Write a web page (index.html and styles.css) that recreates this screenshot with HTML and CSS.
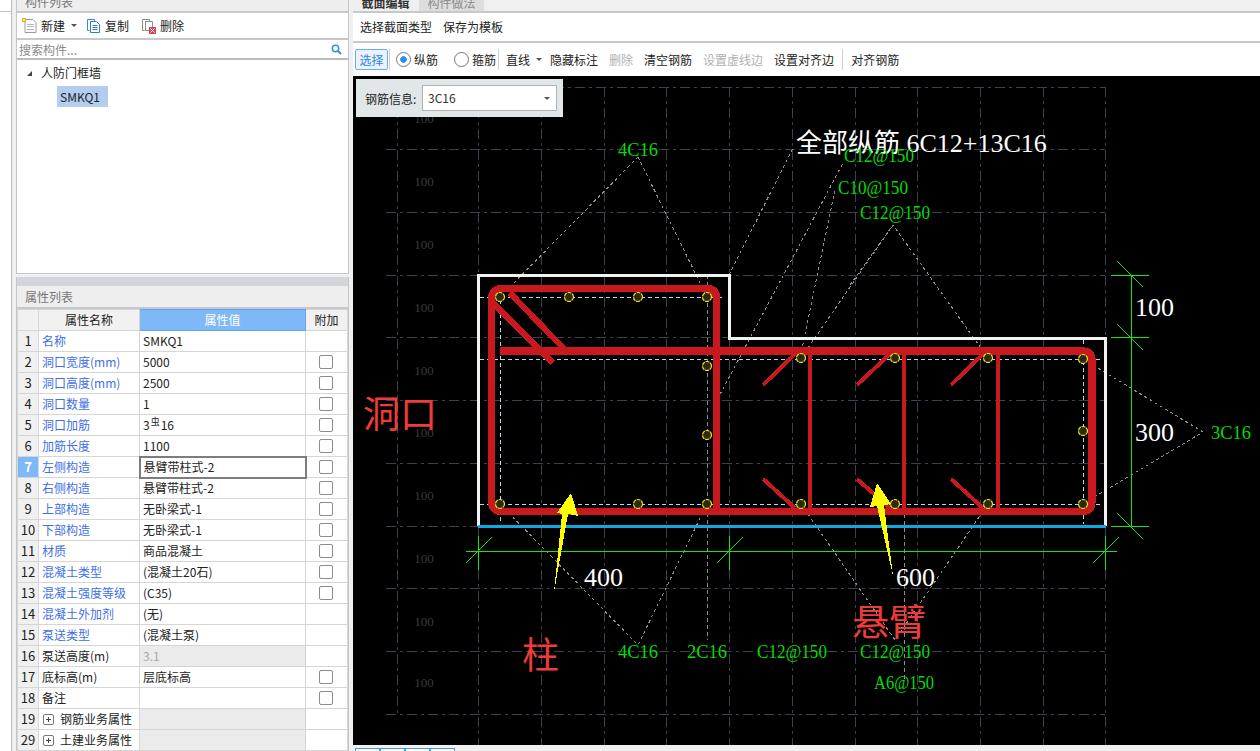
FILE: index.html
```html
<!DOCTYPE html>
<html lang="zh">
<head>
<meta charset="utf-8">
<title>截面编辑</title>
<link rel="stylesheet" href="styles.css">
</head>
<body>
<div class="app">
  <aside class="sidebar">
    <div class="rail"><div class="rail-top"></div></div>
    <div class="panels">
      <section class="list-panel">
        <div class="panel-clip"><span>构件列表</span></div>
        <div class="list-tools">
          <span class="tool tool-new">
            <svg class="ico" viewBox="0 0 15 16"><path d="M3 1.500h8l3 3v10H3z" fill="#fff" stroke="#9a9a9a"/><path d="M5 6.500h7M5 8.500h7M5 11.500h7" stroke="#b5b5b5"/><rect x="0" y="0" width="4" height="4" fill="#f5a623"/><rect x="1" y="1" width="2" height="2" fill="#ffe2a8"/></svg>
            新建<i class="caret"></i></span>
          <span class="tool tool-copy">
            <svg class="ico" viewBox="0 0 15 16"><path d="M1.500 1.500h7v2" fill="none" stroke="#3f86d8"/><path d="M1.500 1.500v11h2" fill="none" stroke="#3f86d8"/><path d="M4.500 3.500h6l3 3v8h-9z" fill="#fff" stroke="#2f7bd6"/><path d="M6.500 7.500h5M6.500 9.500h5M6.500 11.500h5" stroke="#2f7bd6"/></svg>
            复制</span>
          <span class="tool tool-del">
            <svg class="ico" viewBox="0 0 15 16"><path d="M1.500 1.500h7v2M1.500 1.500v11h2" fill="none" stroke="#8c8c8c"/><path d="M4.500 3.500h7v9h-7z" fill="#fff" stroke="#8c8c8c"/><rect x="8" y="9" width="7" height="7" fill="#d9454f"/><path d="M9.500 10.500l4 4M13.500 10.500l-4 4" stroke="#fff"/></svg>
            删除</span>
        </div>
        <div class="search">
          <span>搜索构件...</span>
          <svg class="search-ico" viewBox="0 0 11 11"><circle cx="4.500" cy="4.500" r="3.200" fill="none" stroke="#3d8fd0" stroke-width="1.500"/><path d="M7 7l3 3" stroke="#3d8fd0" stroke-width="2"/></svg>
        </div>
        <div class="tree">
          <div class="tree-root"><i class="tree-arrow"></i>人防门框墙</div>
          <div class="tree-leaf"><span>SMKQ1</span></div>
        </div>
      </section>
      <section class="props-panel">
        <div class="props-band"></div>
        <div class="props-title">属性列表</div>
        <table class="props">
          <colgroup><col class="c-idx"><col class="c-name"><col class="c-val"><col class="c-add"></colgroup>
          <thead>
            <tr><th></th><th>属性名称</th><th class="active">属性值</th><th>附加</th></tr>
          </thead>
          <tbody>
            <tr><td class="idx">1</td><td class="pub">名称</td><td>SMKQ1</td><td class="add"></td></tr>
            <tr><td class="idx">2</td><td class="pub">洞口宽度(mm)</td><td>5000</td><td class="add"><i class="chk"></i></td></tr>
            <tr><td class="idx">3</td><td class="pub">洞口高度(mm)</td><td>2500</td><td class="add"><i class="chk"></i></td></tr>
            <tr><td class="idx">4</td><td class="pub">洞口数量</td><td>1</td><td class="add"><i class="chk"></i></td></tr>
            <tr><td class="idx">5</td><td class="pub">洞口加筋</td><td>3<sup class="rebar">虫</sup>16</td><td class="add"><i class="chk"></i></td></tr>
            <tr><td class="idx">6</td><td class="pub">加筋长度</td><td>1100</td><td class="add"><i class="chk"></i></td></tr>
            <tr><td class="idx idx-on">7</td><td class="pub">左侧构造</td><td class="editing">悬臂带柱式-2</td><td class="add"><i class="chk"></i></td></tr>
            <tr><td class="idx">8</td><td class="pub">右侧构造</td><td>悬臂带柱式-2</td><td class="add"><i class="chk"></i></td></tr>
            <tr><td class="idx">9</td><td class="pub">上部构造</td><td>无卧梁式-1</td><td class="add"><i class="chk"></i></td></tr>
            <tr><td class="idx">10</td><td class="pub">下部构造</td><td>无卧梁式-1</td><td class="add"><i class="chk"></i></td></tr>
            <tr><td class="idx">11</td><td class="pub">材质</td><td>商品混凝土</td><td class="add"><i class="chk"></i></td></tr>
            <tr><td class="idx">12</td><td class="pub">混凝土类型</td><td>(混凝土20石)</td><td class="add"><i class="chk"></i></td></tr>
            <tr><td class="idx">13</td><td class="pub">混凝土强度等级</td><td>(C35)</td><td class="add"><i class="chk"></i></td></tr>
            <tr><td class="idx">14</td><td class="pub">混凝土外加剂</td><td>(无)</td><td class="add"></td></tr>
            <tr><td class="idx">15</td><td class="pub">泵送类型</td><td>(混凝土泵)</td><td class="add"></td></tr>
            <tr><td class="idx">16</td><td>泵送高度(m)</td><td class="off">3.1</td><td class="add"></td></tr>
            <tr><td class="idx">17</td><td>底标高(m)</td><td>层底标高</td><td class="add"><i class="chk"></i></td></tr>
            <tr><td class="idx">18</td><td>备注</td><td></td><td class="add"><i class="chk"></i></td></tr>
            <tr><td class="idx">19</td><td class="group"><i class="plus"></i>钢筋业务属性</td><td class="off"></td><td class="add"></td></tr>
            <tr><td class="idx">29</td><td class="group"><i class="plus"></i>土建业务属性</td><td class="off"></td><td class="add"></td></tr>
          </tbody>
        </table>
      </section>
    </div>
  </aside>
  <main class="editor">
    <div class="tabs">
      <span class="tab tab-on">截面编辑</span>
      <span class="tab">构件做法</span>
    </div>
    <div class="bar-one">
      <span class="btn">选择截面类型</span>
      <span class="btn">保存为模板</span>
    </div>
    <div class="bar-two">
      <span class="btn-select">选择</span>
      <i class="sep"></i>
      <span class="radio radio-on">纵筋</span>
      <span class="radio radio-2">箍筋</span>
      <i class="sep"></i>
      <span class="btn btn-line">直线<i class="caret"></i></span>
      <span class="btn">隐藏标注</span>
      <span class="btn btn-off">删除</span>
      <span class="btn">清空钢筋</span>
      <span class="btn btn-off">设置虚线边</span>
      <span class="btn">设置对齐边</span>
      <i class="sep sep-last"></i>
      <span class="btn">对齐钢筋</span>
    </div>
    <div class="canvas">
      <svg class="drawing" viewBox="353 76 907 669">
        <g class="grid">
          <path d="M386 87H1105M386 149H1105M386 212H1105M386 275H1105M386 337H1105M386 400H1105M386 463H1105M386 526H1105M386 588H1105M386 651H1105M386 714H1105"/>
          <path d="M397 87V714M478 87V745M541 87V745M604 87V745M666 87V745M729 87V745M792 87V745M855 87V745M917 87V745M980 87V745M1043 87V745M1105 87V745"/>
        </g>
        <g class="scale-labels">
          <text x="424" y="123">100</text><text x="424" y="186">100</text><text x="424" y="249">100</text><text x="424" y="312">100</text><text x="424" y="375">100</text><text x="424" y="437">100</text><text x="424" y="500">100</text><text x="424" y="563">100</text><text x="424" y="626">100</text><text x="424" y="687">100</text>
        </g>
        <path class="guide" d="M480 297H722M480 359H1100M480 504H1100M500 286V524M1083 340V524"/>
        <path class="guide-dim" d="M707 275V640M904 430V680"/>
        <path class="leader" d="M638 157L500 297M638 157L707 297M729 275L793 148M717 400L843 163M800 358L835 190M850 285L893 225L988 358M801 358L893 225M500 504L638 645L707 504M1083 359L1203 432L1083 504M801 504L895 640L988 504"/>
        <path class="rebar-main" d="M501 288.500H706Q716.500 288.500 716.500 299V511M491.500 300Q491.500 288.500 503 288.500M491.500 296V500Q491.500 511.500 503 511.500H1082Q1092 511.500 1092 501V361Q1092 351 1082 351H500"/>
        <path class="rebar-hook" d="M493 303L553 363M510 293L567 352"/>
        <path class="rebar-tie" d="M810 351V511M904 351V511M998 351V511M763 385L795 354M857 385L890 354M951 385L983 354M763 479L795 508M857 479L890 508M951 479L983 508"/>
        <g class="bars">
          <circle cx="500" cy="297" r="4.500"/><circle cx="569" cy="297" r="4.500"/><circle cx="638" cy="297" r="4.500"/><circle cx="707" cy="297" r="4.500"/><circle cx="707" cy="366" r="4.500"/><circle cx="707" cy="435" r="4.500"/><circle cx="707" cy="504" r="4.500"/><circle cx="638" cy="504" r="4.500"/><circle cx="500" cy="504" r="4.500"/><circle cx="801" cy="358" r="4.500"/><circle cx="895" cy="358" r="4.500"/><circle cx="988" cy="358" r="4.500"/><circle cx="1083" cy="359" r="4.500"/><circle cx="1083" cy="431" r="4.500"/><circle cx="1083" cy="504" r="4.500"/><circle cx="988" cy="504" r="4.500"/><circle cx="895" cy="504" r="4.500"/><circle cx="801" cy="504" r="4.500"/>
        </g>
        <path class="outline" d="M478 526V275.500H729V338.500H1105.500V526"/>
        <path class="base" d="M478 526H1106"/>
        <path class="dim" d="M466 551.500H1117M478.500 536V570M466 563L492 537M729.500 536V570M717 563L743 537M1105.500 536V570M1093 563L1119 537M1131.500 275V526M1111 275.500H1149M1111 337.500H1149M1111 526.500H1149M1117 261L1143 287M1117 324L1143 350M1117 513L1143 539"/>
        <polygon class="arrow" points="571,493 578,516 568,514 554,592 562,514 557,513"/>
        <polygon class="arrow" points="877,483 891,504 884,505 893,576 877,506 870,507"/>
        <g class="notes">
          <text x="796" y="152">全部纵筋 6C12+13C16</text>
          <text x="584" y="586">400</text>
          <text x="896" y="586">600</text>
          <text x="1135" y="316">100</text>
          <text x="1135" y="441">300</text>
        </g>
        <g class="labels">
          <text x="618" y="156" textLength="40" lengthAdjust="spacingAndGlyphs">4C16</text>
          <text x="844" y="162" textLength="70" lengthAdjust="spacingAndGlyphs">C12@150</text>
          <text x="838" y="194" textLength="70" lengthAdjust="spacingAndGlyphs">C10@150</text>
          <text x="860" y="219" textLength="70" lengthAdjust="spacingAndGlyphs">C12@150</text>
          <text x="1211" y="439" textLength="40" lengthAdjust="spacingAndGlyphs">3C16</text>
          <text x="618" y="658" textLength="40" lengthAdjust="spacingAndGlyphs">4C16</text>
          <text x="687" y="658" textLength="40" lengthAdjust="spacingAndGlyphs">2C16</text>
          <text x="757" y="658" textLength="70" lengthAdjust="spacingAndGlyphs">C12@150</text>
          <text x="860" y="658" textLength="70" lengthAdjust="spacingAndGlyphs">C12@150</text>
          <text x="874" y="689" textLength="60" lengthAdjust="spacingAndGlyphs">A6@150</text>
        </g>
        <g class="marks">
          <text x="363" y="428">洞口</text>
          <text x="522" y="669">柱</text>
          <text x="852" y="636">悬臂</text>
        </g>
      </svg>
      <div class="rebar-info">
        <label>钢筋信息:</label>
        <div class="select">3C16<i class="caret"></i></div>
      </div>
    </div>
    <div class="view-tabs"><i></i><i></i><i></i><i></i></div>
  </main>
</div>
</body>
</html>
```
FILE: styles.css
```css
* { box-sizing: border-box; }
html, body { margin: 0; padding: 0; height: 100%; overflow: hidden; }
body { font-family: "Noto Sans CJK SC", "Noto Sans", sans-serif; font-size: 12px; color: #222; background: #f0f0f0; }
i { display: block; font-style: normal; }

.app { display: flex; width: 1260px; height: 751px; overflow: hidden; }

/* sidebar */
.sidebar { width: 353px; display: flex; flex: none; }
.rail { width: 12px; background: #fff; border-right: 1px solid #bcbcbc; margin-right: 4px; }
.rail-top { height: 12px; border-bottom: 1px solid #c4c4c4; }
.panels { width: 333px; display: flex; flex-direction: column; }

.list-panel { height: 274px; background: #fff; border: 1px solid #c4c6c9; border-top: 0; display: flex; flex-direction: column; flex: none; }
.panel-clip { height: 13px; background: #eeeeee; border-bottom: 2px solid #c6c8cb; overflow: hidden; color: #777; padding-left: 8px; line-height: 4px; flex: none; }
.list-tools { height: 27px; display: flex; align-items: center; border-bottom: 2px solid #c6c8cb; flex: none; }
.tool { display: flex; align-items: center; height: 25px; }
.tool-new { margin-left: 5px; width: 64px; }
.tool-copy { width: 55px; }
.tool-del { width: 50px; }
.ico { width: 15px; height: 16px; margin-right: 4px; flex: none; }
.tool-new .caret { margin-left: 6px; }
.caret { width: 0; height: 0; border: 3px solid transparent; border-top: 3px solid #555; border-bottom: 0; display: inline-block; }
.search { height: 20px; display: flex; align-items: center; justify-content: space-between; padding: 0 6px 0 2px; border-bottom: 2px solid #b9bbbe; color: #8a8a8a; flex: none; }
.search-ico { width: 11px; height: 11px; }
.tree { flex: 1; padding-top: 3px; }
.tree-root { height: 20px; line-height: 20px; padding-left: 23px; display: flex; align-items: center; }
.tree-arrow { width: 0; height: 0; border-bottom: 5px solid #444; border-left: 5px solid transparent; margin: 0 9px 0 -13px; }
.tree-leaf { padding-left: 40px; margin-top: 3px; }
.tree-leaf span { display: inline-block; height: 21px; line-height: 21px; width: 51px; padding-left: 3px; background: #b2cdef; }

.props-panel { margin-top: 3px; flex: none; background: #fff; border-left: 1px solid #c4c6c9; border-right: 1px solid #c4c6c9; }
.props-band { height: 9px; background: #d4d5da; }
.props-title { height: 23px; line-height: 21px; background: #eeeeee; color: #777; padding-left: 8px; border-bottom: 2px solid #c6c8cb; }
.props { border-collapse: collapse; table-layout: fixed; width: 330px; }
.c-idx { width: 21px; }
.c-name { width: 101px; }
.c-val { width: 166px; }
.c-add { width: 42px; }
.props th, .props td { height: 21px; padding: 0 0 0 3px; border: 1px solid #d6d6d6; font-weight: 400; white-space: nowrap; overflow: hidden; line-height: 18px; }
.props th { background: #f1f1f1; text-align: center; padding: 0; }
.props th.active { background: #7fb8f8; color: #fff; border-color: #62a3ea; }
.props .idx { background: #f0f0f0; text-align: center; padding: 0; font-size: 13px; }
.props .idx-on { background: #7fb8f8; color: #fff; font-weight: 700; }
.props .pub { color: #3f6fe6; }
.props .off { background: #ebebeb; color: #aaa; }
.props .editing { border: 2px solid #7d7d7d; }
.props .group { padding-left: 4px; }
.props .add { padding: 0 2px 0 0; }
.rebar { font-size: 9px; line-height: 0; margin: 0 1px; }
.chk { width: 14px; height: 14px; margin: 0 auto; border: 1px solid #8c8c8c; border-radius: 2px; background: #fff; }
.plus { display: inline-block; width: 11px; height: 11px; border: 1px solid #777; border-radius: 2px; margin-right: 6px; vertical-align: -1px; background: linear-gradient(#444, #444) center / 5px 1px no-repeat, linear-gradient(#444, #444) center / 1px 5px no-repeat; }

/* editor */
.editor { flex: 1; display: flex; flex-direction: column; min-width: 0; }
.tabs { height: 13px; display: flex; align-items: flex-end; border-bottom: 2px solid #c6c8cb; background: #f0f0f0; overflow: hidden; flex: none; }
.tab { width: 65px; height: 11px; text-align: center; line-height: 5px; color: #8a8a8a; background: #dddddd; margin-right: 1px; overflow: hidden; }
.tab-on { background: #efefef; color: #333; font-weight: 700; }
.bar-one { height: 30px; padding: 0 2px 2px 2px; background: #fff; border-bottom: 2px solid #c6c8cb; display: flex; align-items: center; gap: 1px; flex: none; }
.btn { padding: 0 5px; display: inline-flex; align-items: center; height: 21px; white-space: nowrap; }
.bar-two { height: 33px; background: #fff; padding: 0 2px; display: flex; align-items: center; gap: 1px; flex: none; }
.btn-select { width: 33px; height: 21px; line-height: 19px; text-align: center; color: #2f86de; background: #eaf3fd; border: 1px solid #6aaeee; border-radius: 2px; }
.btn-off { color: #b0b0b0; }
.btn-line { padding-right: 2px; }
.bar-two .btn .caret { margin-left: 6px; }
.sep { width: 1px; height: 21px; background: #d0d0d0; margin: 0 1px 0 0; }
.sep-last { margin: 0 2px; }
.radio { display: inline-flex; align-items: center; margin-left: 4px; white-space: nowrap; }
.radio::before { content: ""; width: 13px; height: 13px; border-radius: 50%; border: 1px solid #777; margin-right: 3px; background: #fff; }
.radio-on::before { background: radial-gradient(circle, #2f8cf0 0 3px, #fff 3.500px); }
.radio-2 { margin-left: 15px; margin-right: 1px; }

.canvas { height: 669px; background: #000; position: relative; flex: none; overflow: hidden; }
.drawing { display: block; width: 907px; height: 669px; shape-rendering: crispEdges; }
.grid path { fill: none; stroke: #3b414e; stroke-width: 1; stroke-dasharray: 10 4 3 4; }
.scale-labels text { fill: #3a3a3a; font: 13px "Liberation Serif", serif; text-anchor: middle; }
.guide { fill: none; stroke: #b9d8f2; stroke-dasharray: 4 3; }
.guide-dim { fill: none; stroke: #8a8f96; stroke-dasharray: 4 3; }
.leader { fill: none; stroke: #8f8f8f; stroke-dasharray: 3 3; }
.rebar-main { fill: none; stroke: #c8191f; stroke-width: 7.500; }
.rebar-hook { fill: none; stroke: #c8191f; stroke-width: 6; }
.rebar-tie { fill: none; stroke: #c8191f; stroke-width: 4; }
.bars circle { fill: #2a2a12; stroke: #f2e51c; stroke-width: 1.200; stroke-dasharray: 4 .8; shape-rendering: auto; }
.outline { fill: none; stroke: #f2f2f2; stroke-width: 3; }
.base { fill: none; stroke: #10a8e2; stroke-width: 3; }
.dim { fill: none; stroke: #14e614; stroke-width: 1; shape-rendering: auto; }
.arrow { fill: #ffff00; }
.notes text { fill: #fff; font: 26px "Liberation Serif", "Noto Sans CJK SC", serif; }
.labels text { fill: #00dd00; font: 19px "Liberation Serif", serif; }
.marks text { fill: #ef3b3b; font: 37px "Noto Sans CJK SC", sans-serif; }

.rebar-info { position: absolute; left: 3px; top: 3px; width: 207px; height: 38px; background: #e1e7e9; display: flex; align-items: center; padding-left: 9px; }
.rebar-info label { width: 57px; flex: none; }
.select { width: 135px; height: 26px; line-height: 24px; background: #fff; border: 1px solid #b0b3b5; padding-left: 5px; position: relative; color: #333; }
.select .caret { position: absolute; right: 6px; top: 11px; }

.view-tabs { display: flex; padding: 3px 0 0 2px; }
.view-tabs i { width: 25px; height: 3px; border: 1px solid #3d9bf0; border-bottom: 0; background: #fff; }
```
